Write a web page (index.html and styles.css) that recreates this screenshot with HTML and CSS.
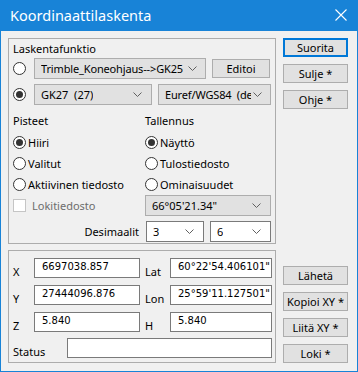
FILE: index.html
```html
<!DOCTYPE html>
<html lang="fi">
<head>
    <meta charset="utf-8">
    <title>Koordinaattilaskenta</title>
    <link rel="stylesheet" href="styles.css">
</head>
<body>
<div class="window">
    <div class="titlebar">
        <span class="titlebar__text">Koordinaattilaskenta</span>
        <svg class="titlebar__close" width="12" height="12" viewBox="0 0 12 12">
            <path d="M0.5 0.5 L11.5 11.5 M11.5 0.5 L0.5 11.5" stroke="#fff" stroke-width="1.1" fill="none"/>
        </svg>
    </div>
    <div class="client">
        <div class="group group_top">
            <div class="caption">Laskentafunktio</div>
            <div class="funcRow funcRow_first">
                <span class="radio"></span>
                <div class="combo combo_func">
                    <span class="combo__text">Trimble_Koneohjaus--&gt;GK25</span>
                    <svg class="combo__arrow" width="9" height="5" viewBox="0 0 9 5"><path d="M0.5 0.5 L4.5 4.5 L8.5 0.5" stroke="#606060" fill="none"/></svg>
                </div>
                <button class="button button_edit">Editoi</button>
            </div>
            <div class="funcRow funcRow_second">
                <span class="radio radio_checked"></span>
                <div class="combo combo_proj">
                    <span class="combo__text">GK27&nbsp; (27)</span>
                    <svg class="combo__arrow" width="9" height="5" viewBox="0 0 9 5"><path d="M0.5 0.5 L4.5 4.5 L8.5 0.5" stroke="#606060" fill="none"/></svg>
                </div>
                <div class="combo combo_datum">
                    <span class="combo__text">Euref/WGS84&nbsp; (deg</span>
                    <svg class="combo__arrow" width="9" height="5" viewBox="0 0 9 5"><path d="M0.5 0.5 L4.5 4.5 L8.5 0.5" stroke="#606060" fill="none"/></svg>
                </div>
            </div>
            <div class="options">
                <div class="caption">Pisteet</div>
                <div class="caption">Tallennus</div>

                <label class="option"><span class="radio radio_checked"></span>Hiiri</label>
                <label class="option"><span class="radio radio_checked"></span>Näyttö</label>

                <label class="option"><span class="radio"></span>Valitut</label>
                <label class="option"><span class="radio"></span>Tulostiedosto</label>

                <label class="option"><span class="radio"></span>Aktiivinen tiedosto</label>
                <label class="option"><span class="radio"></span>Ominaisuudet</label>

                <label class="option option_disabled"><span class="checkbox"></span>Lokitiedosto</label>
                <div class="combo combo_angle">
                    <span class="combo__text">66°05'21.34"</span>
                    <svg class="combo__arrow" width="9" height="5" viewBox="0 0 9 5"><path d="M0.5 0.5 L4.5 4.5 L8.5 0.5" stroke="#606060" fill="none"/></svg>
                </div>
            </div>
            <div class="decimals">
                <span class="decimals__label">Desimaalit</span>
                <div class="combo combo_white combo_dec1">
                    <span class="combo__text">3</span>
                    <svg class="combo__arrow" width="9" height="5" viewBox="0 0 9 5"><path d="M0.5 0.5 L4.5 4.5 L8.5 0.5" stroke="#606060" fill="none"/></svg>
                </div>
                <div class="combo combo_white combo_dec2">
                    <span class="combo__text">6</span>
                    <svg class="combo__arrow" width="9" height="5" viewBox="0 0 9 5"><path d="M0.5 0.5 L4.5 4.5 L8.5 0.5" stroke="#606060" fill="none"/></svg>
                </div>
            </div>
        </div>

        <div class="sideButtons">
            <button class="button button_default">Suorita</button>
            <button class="button">Sulje *</button>
            <button class="button">Ohje *</button>
        </div>

        <div class="group group_bottom">
            <div class="coords">
                <span class="coords__label">X</span>
                <div class="textbox">6697038.857</div>
                <span class="coords__label coords__label_right">Lat</span>
                <div class="textbox">60°22'54.406101"</div>

                <span class="coords__label">Y</span>
                <div class="textbox">27444096.876</div>
                <span class="coords__label coords__label_right">Lon</span>
                <div class="textbox">25°59'11.127501"</div>

                <span class="coords__label">Z</span>
                <div class="textbox">5.840</div>
                <span class="coords__label coords__label_right">H</span>
                <div class="textbox">5.840</div>
            </div>
            <div class="statusRow">
                <span class="coords__label statusRow__label">Status</span>
                <div class="textbox statusRow__box"></div>
            </div>
        </div>

        <div class="sideButtons sideButtons_bottom">
            <button class="button">Lähetä</button>
            <button class="button">Kopioi XY *</button>
            <button class="button">Liitä XY *</button>
            <button class="button">Loki *</button>
        </div>
    </div>
</div>
</body>
</html>
```

FILE: styles.css
```css
body {
    margin: 0;
    padding: 0;
    font-family: 'Noto Sans', sans-serif;
    font-size: 11px;
    color: #000;
    background: #f0f0f0;
}

.window {
    width: 358px;
    height: 372px;
    box-sizing: border-box;
    border: 1px solid #1883d7;
    border-top: none;
    background: #f0f0f0;
    display: flex;
    flex-direction: column;
}

.titlebar {
    height: 31px;
    margin: 0 -1px;
    background: #1883d7;
    display: flex;
    align-items: center;
    justify-content: space-between;
    padding: 0 11px 0 10px;
    flex-shrink: 0;
}

.titlebar__text {
    color: #fff;
    font-size: 14.5px;
    line-height: 20px;
    padding-bottom: 2px;
}

.titlebar__close {
    margin-bottom: 2px;
}

.client {
    display: grid;
    grid-template-columns: 268px 65px;
    grid-template-rows: 206px 113px;
    column-gap: 7px;
    row-gap: 6px;
    padding: 7px 0 0 7px;
}

.group {
    border: 1px solid #acacac;
    box-sizing: border-box;
}

.caption {
    line-height: 14px;
    height: 14px;
}

.group_top {
    padding: 2px 0 0 4px;
}

.group_top > .caption {
    margin-top: 1px;
}

.funcRow {
    display: flex;
    align-items: center;
    height: 21px;
}

.funcRow_first {
    margin-top: 2px;
}

.funcRow_second {
    margin-top: 5px;
}

.funcRow .radio {
    margin-right: 8px;
}

.radio {
    width: 13px;
    height: 13px;
    box-sizing: border-box;
    border: 1px solid #333;
    border-radius: 50%;
    background: #fff;
    flex-shrink: 0;
    display: flex;
    align-items: center;
    justify-content: center;
}

.radio_checked:after {
    content: '';
    width: 7px;
    height: 7px;
    border-radius: 50%;
    background: #333;
}

.checkbox {
    width: 13px;
    height: 13px;
    box-sizing: border-box;
    border: 1px solid #c5c5c5;
    background: #fff;
    flex-shrink: 0;
    margin-right: 4px;
}

.combo {
    height: 21px;
    box-sizing: border-box;
    border: 1px solid #adadad;
    background: #e1e1e1;
    display: flex;
    align-items: center;
    justify-content: space-between;
    padding: 0 9px 0 6px;
    overflow: hidden;
    white-space: nowrap;
}

.combo__text {
    overflow: hidden;
}

.combo__arrow {
    flex-shrink: 0;
    margin-left: 2px;
}

.combo_white {
    background: #fff;
    border-color: #7a7a7a;
}

.combo_func {
    width: 172px;
    padding-right: 8px;
}

.combo_func .combo__text {
    letter-spacing: -0.15px;
}

.combo_proj {
    width: 118px;
}

.combo_datum {
    width: 113px;
    margin-left: 6px;
    padding-right: 8px;
}

.combo_datum .combo__text {
    width: 86px;
    letter-spacing: -0.15px;
}

.combo_angle {
    width: 126px;
    align-self: start;
}

.button {
    font-family: inherit;
    font-size: 11px;
    height: 19px;
    padding: 0;
    border: 1px solid #adadad;
    background: #e1e1e1;
    color: #000;
    line-height: 16px;
}

.button_edit {
    width: 58px;
    margin-left: 6px;
}

.button_default {
    border: 2px solid #0078d7;
    line-height: 14px;
}

.options {
    display: grid;
    grid-template-columns: 132px 126px;
    grid-template-rows: 18px 21px 20px 22px 21px;
    margin-top: 9px;
}

.option {
    display: flex;
    align-items: center;
    gap: 2px;
}

.option_disabled {
    color: #6d6d6d;
    align-self: start;
    height: 21px;
}

.decimals {
    display: flex;
    align-items: center;
    height: 21px;
    margin-top: 5px;
}

.decimals__label {
    width: 126px;
    text-align: right;
}

.combo_dec1 {
    width: 58px;
    margin-left: 7px;
}

.combo_dec2 {
    width: 61px;
    margin-left: 6px;
}

.sideButtons {
    display: flex;
    flex-direction: column;
    gap: 7px;
}

.sideButtons_bottom {
    padding-top: 16px;
}

.group_bottom {
    padding: 7px 0 0 4px;
}

.coords {
    display: grid;
    grid-template-columns: 21px 106px 30px 102px;
    grid-template-rows: 20px 20px 20px;
    row-gap: 7px;
}

.coords__label {
    align-self: end;
    line-height: 14px;
    margin-bottom: -1px;
}

.coords__label_right {
    padding-left: 5px;
}

.textbox {
    height: 20px;
    box-sizing: border-box;
    border: 1px solid #7a7a7a;
    background: #fff;
    font-family: 'DejaVu Sans', sans-serif;
    font-size: 10px;
    line-height: 16px;
    padding: 0 7px;
    white-space: nowrap;
}

.statusRow {
    display: flex;
    height: 20px;
    margin-top: 6px;
}

.statusRow__label {
    width: 54px;
}

.statusRow__box {
    width: 205px;
}
```
